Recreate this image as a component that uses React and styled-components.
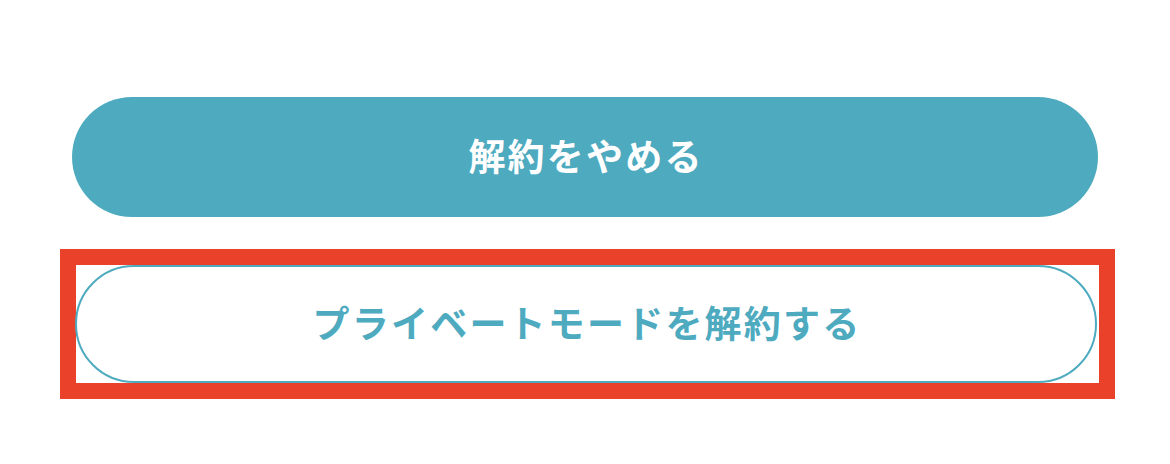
import React from 'react'
import styled, { createGlobalStyle } from 'styled-components'

const GlobalStyle = createGlobalStyle`
    html, body{
        margin: 0;
        padding: 0;
        background: #ffffff;
    }
    body{
        font-family: "Noto Sans CJK JP", "Noto Sans", sans-serif;
    }
`

const Page = styled.div`
    width: 1170px;
    height: 464px;
    display: flex;
    flex-direction: column;
    align-items: flex-start;
    padding-top: 97px;
    box-sizing: border-box;
`

const Button = styled.button`
    display: flex;
    align-items: center;
    justify-content: center;
    box-sizing: border-box;
    border-radius: 60px;
    font-family: "Noto Sans CJK JP", sans-serif;
    font-size: 37px;
    font-weight: 600;
    letter-spacing: 2.2px;
    cursor: pointer;
    padding: 0 0 4px 2px;
    background: ${p => (p.$outline ? '#ffffff' : '#4eaabf')};
    color: ${p => (p.$outline ? '#4eaabf' : '#ffffff')};
    border: ${p => (p.$outline ? '2px solid #4eaabf' : 'none')};
`

const Primary = styled(Button)`
    margin-left: 72px;
    width: 1026px;
    height: 120px;
`

const Highlight = styled.div`
    margin-top: 32px;
    margin-left: 60px;
    width: 1055px;
    height: 150px;
    box-sizing: border-box;
    border: 16px solid #e9412a;
    display: flex;
    align-items: center;
`

const Secondary = styled(Button)`
    width: 1022px;
    height: 118px;
    margin-left: -1px;
`

function App() {
    return (
        <>
            <GlobalStyle />
            <Page>
                <Primary>解約をやめる</Primary>
                <Highlight>
                    <Secondary $outline>プライベートモードを解約する</Secondary>
                </Highlight>
            </Page>
        </>
    )
}

export default App
